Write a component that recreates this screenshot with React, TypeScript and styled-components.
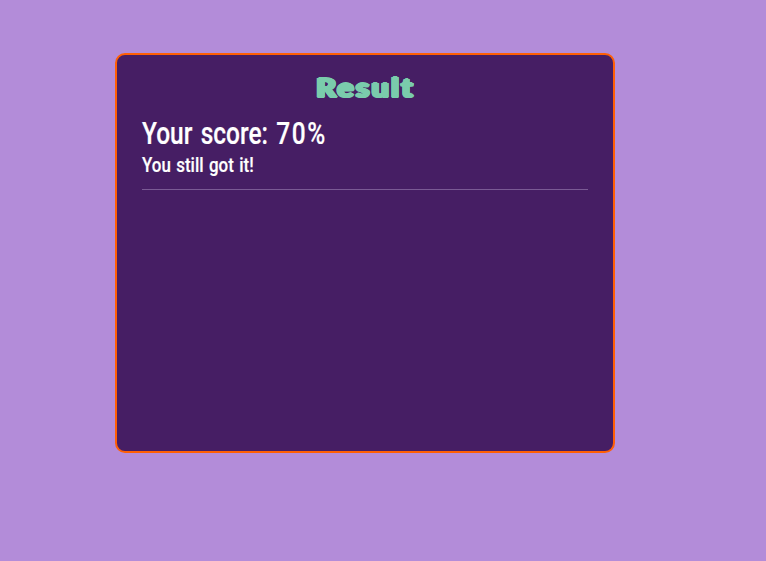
import React from "react";
import styled, { createGlobalStyle } from "styled-components";

const GlobalStyle = createGlobalStyle`
  * { box-sizing: border-box; }
  body { margin: 0; background: #b38cd9; overflow: hidden; }
`;

const Page = styled.main`
  height: 561px;
  padding: 53px 0 0 115px;
`;

const Card = styled.section`
  width: 500px;
  height: 400px;
  padding: 13px 25px;
  border: 2px solid #ff5f05;
  border-radius: 10px;
  background: #461e64;
  color: #fff;
  font-family: Roboto, sans-serif;
`;

const Line = styled.div<{ $width: number }>`
  width: ${(p) => p.$width}px;
  white-space: nowrap;
  transform-origin: left;
  -webkit-text-stroke: 0.2px #fff;
`;

/* Layered shadows swell the letters and round off their corners. */
const Title = styled.h1`
  margin: 0;
  height: 38px;
  text-align: center;
  font: 900 27px/38px Lato, sans-serif;
  color: #7accac;
  letter-spacing: 2px;
  text-indent: 1px;
  transform: scaleX(1.13);
  text-shadow:
    1.5px 0 #7accac, -1.5px 0 #7accac, 0 0.8px #7accac, 0 -0.8px #7accac,
    1.1px 0.5px #7accac, -1.1px 0.5px #7accac, 1.1px -0.5px #7accac, -1.1px -0.5px #7accac;
`;

const Score = styled(Line)`
  margin-top: 8px;
  font-size: 32px;
  line-height: 38px;
  font-weight: 500;
  word-spacing: 3px;
  transform: scaleX(0.765);
`;

const Percent = styled.span`
  letter-spacing: 2px;
`;

const Message = styled(Line)`
  margin-top: 1px;
  font-size: 21px;
  line-height: 25px;
  font-weight: 500;
  word-spacing: 1.5px;
  transform: scaleX(0.806);
`;

const Divider = styled.hr`
  width: 446px;
  height: 1px;
  margin: 11px 0 0;
  border: 0;
  background: #7a5a94;
`;

export default function App() {
  return (
    <>
      <GlobalStyle />
      <Page>
        <Card>
          <Title>Result</Title>
          <Score $width={241}>
            Your score: <Percent>70%</Percent>
          </Score>
          <Message $width={140}>You still got it!</Message>
          <Divider />
        </Card>
      </Page>
    </>
  );
}
